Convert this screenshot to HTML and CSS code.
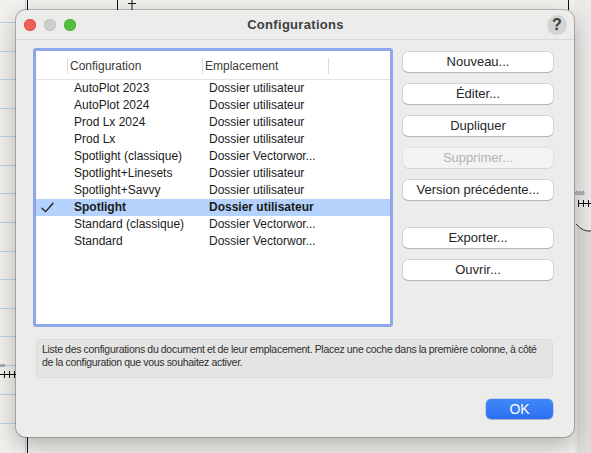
FILE: index.html
```html
<!DOCTYPE html>
<html lang="fr">
<head>
<meta charset="utf-8">
<title>Configurations</title>
<link rel="stylesheet" href="styles.css">
</head>
<body>
<svg class="backdrop" width="591" height="453" viewBox="0 0 591 453" xmlns="http://www.w3.org/2000/svg">
  <rect x="0" y="0" width="591" height="453" fill="#f2f1ed"/>
  <rect x="574" y="0" width="17" height="453" fill="#ebebea"/>
  <path d="M577 226 Q584 232 591 231 L591 453 L577 453 Z" fill="#dedfda"/>
  <path d="M576 224 Q583 232 591 231" stroke="#333" stroke-width="1" fill="none"/>
  <g stroke="#b9d4ef" stroke-width="1">
    <line x1="0" y1="22.5" x2="24" y2="22.5"/>
    <line x1="0" y1="51.5" x2="24" y2="51.5"/>
    <line x1="0" y1="79.5" x2="24" y2="79.5"/>
    <line x1="0" y1="108.5" x2="24" y2="108.5"/>
    <line x1="0" y1="136.5" x2="24" y2="136.5"/>
    <line x1="0" y1="165.5" x2="24" y2="165.5"/>
    <line x1="0" y1="193.5" x2="24" y2="193.5"/>
    <line x1="0" y1="222.5" x2="24" y2="222.5"/>
    <line x1="0" y1="251.5" x2="24" y2="251.5"/>
    <line x1="0" y1="279.5" x2="24" y2="279.5"/>
    <line x1="0" y1="308.5" x2="24" y2="308.5"/>
    <line x1="0" y1="336.5" x2="24" y2="336.5"/>
    <line x1="0" y1="365.5" x2="24" y2="365.5"/>
    <line x1="0" y1="394.5" x2="24" y2="394.5"/>
    <line x1="0" y1="423.5" x2="24" y2="423.5"/>
    <line x1="25.5" y1="0" x2="25.5" y2="453"/>
  </g>
  <g stroke="#111" stroke-width="1">
    <line x1="27.5" y1="0" x2="27.5" y2="453"/>
    <line x1="117.5" y1="0" x2="117.5" y2="10"/>
    <line x1="128" y1="3.5" x2="136" y2="3.5"/>
    <line x1="132" y1="0" x2="132" y2="10"/>
    <line x1="568.5" y1="0" x2="568.5" y2="10"/>
    <line x1="0" y1="374.5" x2="16" y2="374.5"/>
    <line x1="4.5" y1="371" x2="4.5" y2="378"/>
    <line x1="9.5" y1="371" x2="9.5" y2="378"/>
    <line x1="14.5" y1="371" x2="14.5" y2="378"/>
    <line x1="578" y1="203.5" x2="591" y2="203.5"/>
    <line x1="578.5" y1="200" x2="578.5" y2="207"/>
    <line x1="583.5" y1="200" x2="583.5" y2="207"/>
    <line x1="588.5" y1="200" x2="588.5" y2="207"/>
  </g>
  <text x="575" y="195" class="tiny">000</text>
  <text x="-1" y="367" class="tiny">oo</text>
</svg>

<div class="window">
  <div class="titlebar">
    <div class="lights">
      <span class="light red"></span>
      <span class="light gray"></span>
      <span class="light green"></span>
    </div>
    <div class="title">Configurations</div>
    <div class="help-wrap"><span class="help">?</span></div>
  </div>
  <div class="content">
    <div class="main">
      <div class="table">
        <div class="thead">
          <div class="th th-check"></div>
          <div class="th">Configuration</div>
          <div class="th">Emplacement</div>
          <div class="th"></div>
        </div>
        <div class="tbody">
          <div class="tr"><div class="td"></div><div class="td">AutoPlot 2023</div><div class="td">Dossier utilisateur</div></div>
          <div class="tr"><div class="td"></div><div class="td">AutoPlot 2024</div><div class="td">Dossier utilisateur</div></div>
          <div class="tr"><div class="td"></div><div class="td">Prod Lx 2024</div><div class="td">Dossier utilisateur</div></div>
          <div class="tr"><div class="td"></div><div class="td">Prod Lx</div><div class="td">Dossier utilisateur</div></div>
          <div class="tr"><div class="td"></div><div class="td">Spotlight (classique)</div><div class="td">Dossier Vectorwor...</div></div>
          <div class="tr"><div class="td"></div><div class="td">Spotlight+Linesets</div><div class="td">Dossier utilisateur</div></div>
          <div class="tr"><div class="td"></div><div class="td">Spotlight+Savvy</div><div class="td">Dossier utilisateur</div></div>
          <div class="tr selected"><div class="td td-check"><svg width="13" height="11" viewBox="0 0 13 11"><path d="M1 6.2 L4.6 9.6 L12 1.2" stroke="#1a1a1a" stroke-width="1.3" fill="none" stroke-linecap="round" stroke-linejoin="round"/></svg></div><div class="td">Spotlight</div><div class="td">Dossier utilisateur</div></div>
          <div class="tr"><div class="td"></div><div class="td">Standard (classique)</div><div class="td">Dossier Vectorwor...</div></div>
          <div class="tr"><div class="td"></div><div class="td">Standard</div><div class="td">Dossier Vectorwor...</div></div>
        </div>
      </div>
      <div class="actions">
        <button class="btn">Nouveau...</button>
        <button class="btn">Éditer...</button>
        <button class="btn">Dupliquer</button>
        <button class="btn disabled">Supprimer...</button>
        <button class="btn btn-spaced">Version précédente...</button>
        <button class="btn">Exporter...</button>
        <button class="btn">Ouvrir...</button>
      </div>
    </div>
    <div class="desc">Liste des configurations du document et de leur emplacement. Placez une coche dans la première colonne, à côté de la configuration que vous souhaitez activer.</div>
    <div class="footer">
      <button class="btn-ok">OK</button>
    </div>
  </div>
</div>
</body>
</html>
```

FILE: styles.css
```css
* { box-sizing: border-box; }

html, body {
  margin: 0;
  padding: 0;
  width: 591px;
  height: 453px;
  overflow: hidden;
  font-family: "Liberation Sans", Arial, sans-serif;
  background: #f2f1ed;
}

.backdrop {
  position: absolute;
  left: 0;
  top: 0;
}

.tiny {
  font-family: "DejaVu Sans", sans-serif;
  font-size: 5px;
  fill: #333;
}

.window {
  position: absolute;
  left: 16px;
  top: 10px;
  width: 558px;
  height: 427px;
  background: #ececeb;
  border-radius: 10px;
  box-shadow: 0 0 0 1px rgba(0, 0, 0, 0.22), 0 8px 24px rgba(0, 0, 0, 0.28);
  display: flex;
  flex-direction: column;
  overflow: hidden;
}

.titlebar {
  height: 30px;
  flex: none;
  border-bottom: 1px solid #d9d9d8;
  display: grid;
  grid-template-columns: 1fr auto 1fr;
  align-items: center;
  padding: 0 7px 0 8px;
}

.lights {
  display: flex;
  gap: 8px;
}

.light {
  width: 12px;
  height: 12px;
  border-radius: 50%;
  display: block;
}

.red { background: #ed5f57; box-shadow: inset 0 0 0 0.5px #d6463e; }
.gray { background: #cdcdcc; box-shadow: inset 0 0 0 0.5px #b9b9b8; }
.green { background: #54bf3f; box-shadow: inset 0 0 0 0.5px #3ea62c; }

.title {
  font-size: 13px;
  font-weight: bold;
  color: #3f3f3f;
  letter-spacing: 0.3px;
}

.help-wrap {
  display: flex;
  justify-content: flex-end;
}

.help {
  width: 20px;
  height: 20px;
  border-radius: 50%;
  background: #d3d3d2;
  color: #3a3a3a;
  font-size: 16px;
  font-weight: bold;
  display: flex;
  align-items: center;
  justify-content: center;
  line-height: 1;
}

.content {
  flex: 1;
  padding: 8px 21px 0 17px;
  display: flex;
  flex-direction: column;
}

.main {
  display: flex;
  gap: 10px;
}

.table {
  width: 360px;
  height: 279px;
  border: 3px solid #8ea7eb;
  border-radius: 3px;
  background: #ffffff;
}

.thead {
  display: grid;
  grid-template-columns: 31px 135px 126px 1fr;
  height: 29px;
  padding-top: 7px;
  border-bottom: 1px solid #e2e2e2;
}

.th {
  height: 16px;
  border-left: 1px solid #dddddd;
  font-size: 12px;
  color: #3b3b3b;
  padding-left: 2px;
  line-height: 16px;
}

.th-check { border-left: none; }

.tr {
  display: grid;
  grid-template-columns: 31px 135px 126px;
  height: 17px;
  font-size: 12px;
  line-height: 17px;
  color: #1b1b1b;
}

.td {
  padding-left: 7px;
  white-space: nowrap;
}

.tr.selected {
  background: #b4d2fb;
  font-weight: bold;
}

.td-check {
  display: flex;
  align-items: center;
  padding-left: 5px;
}

.actions {
  width: 150px;
  padding-top: 4px;
  display: flex;
  flex-direction: column;
  gap: 12px;
}

.btn {
  height: 20px;
  width: 150px;
  border: none;
  border-radius: 5px;
  background: #ffffff;
  box-shadow: 0 0 0 0.5px rgba(0, 0, 0, 0.18), 0 1px 1px rgba(0, 0, 0, 0.16);
  font-family: "Liberation Sans", Arial, sans-serif;
  font-size: 13px;
  color: #262626;
  padding: 0;
  line-height: 20px;
}

.btn.disabled {
  background: #f3f3f2;
  color: #b3b3b3;
  box-shadow: 0 0 0 0.5px rgba(0, 0, 0, 0.08), 0 1px 1px rgba(0, 0, 0, 0.06);
}

.btn-spaced {
  margin-bottom: 16px;
}

.desc {
  margin-top: 12px;
  margin-left: 3px;
  width: 517px;
  height: 39px;
  border: 1px solid #dadad9;
  border-radius: 5px;
  background: #e4e4e3;
  padding: 3px 4px 0 5px;
  font-size: 10.5px;
  letter-spacing: -0.28px;
  word-spacing: -0.3px;
  line-height: 13px;
  color: #303030;
}

.footer {
  margin-top: 21px;
  display: flex;
  justify-content: flex-end;
}

.btn-ok {
  width: 67px;
  height: 20px;
  border: none;
  border-radius: 5px;
  background: linear-gradient(#3f88f8, #2c6ff4);
  box-shadow: 0 0 0 0.5px rgba(0, 60, 200, 0.3), 0 1px 1px rgba(0, 0, 0, 0.15);
  color: #ffffff;
  font-family: "Liberation Sans", Arial, sans-serif;
  font-size: 14px;
  padding: 0;
  line-height: 20px;
}
```
